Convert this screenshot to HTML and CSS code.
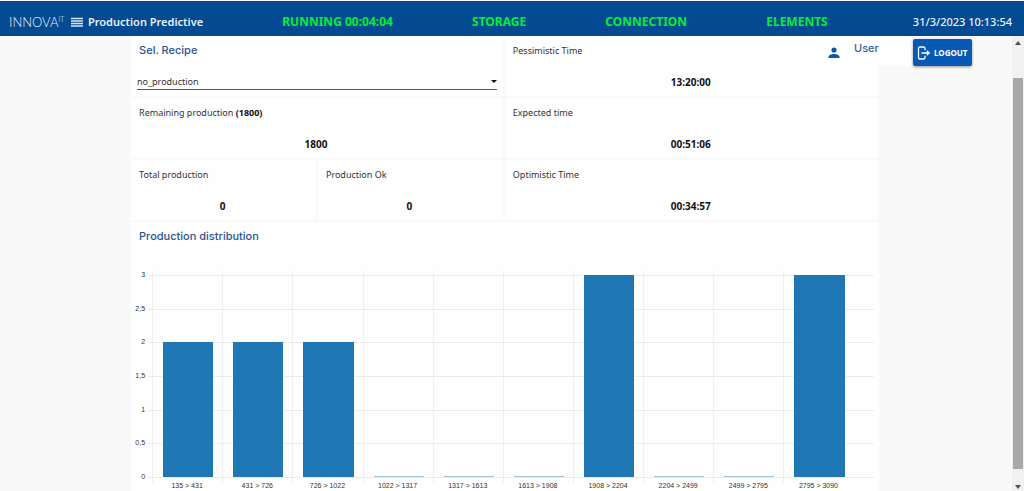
FILE: index.html
```html
<!DOCTYPE html>
<html lang="en">
<head>
<meta charset="utf-8">
<meta name="viewport" content="width=device-width, initial-scale=1">
<title>Production Predictive</title>
<link rel="stylesheet" href="styles.css">
</head>
<body>
<header class="topbar">
  <div class="brand">
    <span class="logo">INNOVA<sup class="logo-sup">IT</sup></span>
    <button class="menu-button" type="button" aria-label="Menu">
      <svg width="12" height="10" viewBox="0 0 12 10" aria-hidden="true"><path d="M0 1.500h12M0 4h12M0 6.500h12M0 9h12" stroke="#d5e4f5" stroke-width="1.400"/></svg>
    </button>
    <h1 class="page-title">Production Predictive</h1>
  </div>
  <span class="status">RUNNING 00:04:04</span>
  <span class="status">STORAGE</span>
  <span class="status">CONNECTION</span>
  <span class="status">ELEMENTS</span>
  <time class="clock">31/3/2023 10:13:54</time>
</header>

<div class="workspace">
  <main class="panel">
    <section class="cells">
      <div class="cell span-two">
        <label class="heading" for="recipe">Sel. Recipe</label>
        <div class="select-wrap">
          <select class="recipe" id="recipe"><option>no_production</option></select>
        </div>
      </div>
      <div class="cell">
        <span class="label">Pessimistic Time</span>
        <strong class="value">13:20:00</strong>
      </div>
      <div class="cell span-two">
        <span class="label">Remaining production <b>(1800)</b></span>
        <strong class="value">1800</strong>
      </div>
      <div class="cell">
        <span class="label">Expected time</span>
        <strong class="value">00:51:06</strong>
      </div>
      <div class="cell">
        <span class="label">Total production</span>
        <strong class="value">0</strong>
      </div>
      <div class="cell">
        <span class="label">Production Ok</span>
        <strong class="value">0</strong>
      </div>
      <div class="cell">
        <span class="label">Optimistic Time</span>
        <strong class="value">00:34:57</strong>
      </div>
    </section>

    <section class="distribution">
      <h2 class="heading">Production distribution</h2>
      <div class="chart">
        <div class="y-axis">
          <span>3</span><span>2,5</span><span>2</span><span>1,5</span><span>1</span><span>0,5</span><span>0</span>
        </div>
        <div class="lines"><i></i><i></i><i></i><i></i><i></i><i></i><i></i></div>
        <div class="columns">
          <div class="column"><div class="bar" style="height:66.67%"></div></div>
          <div class="column"><div class="bar" style="height:66.67%"></div></div>
          <div class="column"><div class="bar" style="height:66.67%"></div></div>
          <div class="column"><div class="bar empty"></div></div>
          <div class="column"><div class="bar empty"></div></div>
          <div class="column"><div class="bar empty"></div></div>
          <div class="column"><div class="bar" style="height:100%"></div></div>
          <div class="column"><div class="bar empty"></div></div>
          <div class="column"><div class="bar empty"></div></div>
          <div class="column"><div class="bar" style="height:100%"></div></div>
        </div>
        <div class="x-axis">
          <span>135 &gt; 431</span><span>431 &gt; 726</span><span>726 &gt; 1022</span><span>1022 &gt; 1317</span><span>1317 &gt; 1613</span><span>1613 &gt; 1908</span><span>1908 &gt; 2204</span><span>2204 &gt; 2499</span><span>2499 &gt; 2795</span><span>2795 &gt; 3090</span>
        </div>
      </div>
    </section>
  </main>

  <div class="account">
    <svg class="avatar" width="12" height="12" viewBox="0 0 12 12" aria-hidden="true"><circle cx="6" cy="3" r="2.600" fill="#0d57a8"/><path d="M0.500 11V10C0.500 8 3.500 7 6 7s5.500 1 5.500 3v1z" fill="#0d57a8"/></svg>
    <span class="user">User</span>
    <button class="logout" type="button">
      <svg width="14" height="14" viewBox="0 0 14 14" fill="none" stroke="#fff" stroke-width="1.300" aria-hidden="true"><path d="M8 4.200V2.600Q8 1 6.500 1H3Q1.500 1 1.500 2.600v8.800Q1.500 13 3 13h3.500q1.500 0 1.500-1.600V9.800M4.500 7h7.500"/><path d="M10 4.500L13 7l-3 2.500z" fill="#fff" stroke-width=".5"/></svg>
      LOGOUT
    </button>
  </div>

  <div class="scrollbar" aria-hidden="true">
    <svg width="6" height="4" viewBox="0 0 6 4"><path d="M0 4L3 0l3 4z" fill="#505050"/></svg>
    <div class="track"><div class="thumb"></div></div>
    <svg width="6" height="4" viewBox="0 0 6 4"><path d="M0 0l3 4 3-4z" fill="#505050"/></svg>
  </div>
</div>
</body>
</html>
```

FILE: styles.css
```css
* { box-sizing: border-box; }

body {
  margin: 0;
  height: 100vh;
  display: flex;
  flex-direction: column;
  overflow: hidden;
  background: #f9f9f9;
  color: #333;
  font-family: "Noto Sans", "Open Sans", sans-serif;
  font-size: 9px;
  line-height: 14px;
}

/* Top bar */
.topbar {
  display: flex;
  align-items: center;
  justify-content: space-between;
  flex: none;
  height: 36px;
  padding: 6px 12px 0 9px;
  border-top: 1px solid #fff;
  background: #044a92;
  color: #e9f1fa;
  font-size: 11px;
  white-space: nowrap;
}
.brand { display: flex; align-items: center; }
.logo {
  width: 62px;
  font-family: Lato, sans-serif;
  font-weight: 300;
  font-size: 13px;
}
.logo-sup { font-size: 7px; line-height: 7px; vertical-align: 5px; }
.menu-button {
  display: flex;
  width: 12px;
  margin-right: 5px;
  padding: 0;
  border: 0;
  background: none;
}
.page-title { margin: 0; font-size: 11px; font-weight: 600; }
.status { color: #00f032; font-size: 12px; font-weight: 700; }
.clock { padding-left: 6px; font-weight: 500; }

/* Page body */
.workspace {
  position: relative;
  display: flex;
  flex: 1;
  min-height: 0;
}
.panel {
  width: 73%;
  margin: 0 auto 0 13%;
  margin-left: 12.8%;
  background: #fefefe;
}
.cells {
  display: grid;
  grid-template-columns: 1fr 1fr 2fr;
}
.cell {
  display: flex;
  flex-direction: column;
  height: 62px;
  padding: 8px 0 0 8px;
  border-bottom: 2px solid #f9f9f9;
  border-right: 2px solid #f9f9f9;
}
.cell:nth-child(2), .cell:nth-child(4), .cell:nth-child(7) { border-right: 0; }
.span-two { grid-column: span 2; }
.label b { color: #111; }
.value {
  margin: 17px 10px 0 0;
  color: #111;
  font-size: 10px;
  text-align: center;
}
.heading {
  margin: 0;
  color: #2b5597;
  font-family: Inter, sans-serif;
  font-size: 11px;
  font-weight: 500;
}
.cell .heading { line-height: 12px; }

/* Recipe picker */
.select-wrap {
  position: relative;
  margin: 16px 6px 0 -2px;
}
.select-wrap::after {
  content: "";
  position: absolute;
  top: 8px;
  right: 0;
  border: 3px solid transparent;
  border-top-color: #111;
  pointer-events: none;
}
.recipe {
  display: block;
  width: 100%;
  height: 18px;
  padding: 2px 0 0;
  border: 0;
  border-bottom: 1px solid #555;
  border-radius: 0;
  appearance: none;
  background: none;
  color: #333;
  font: inherit;
}

/* Chart */
.distribution .heading { padding: 7px 8px 0; }
.chart {
  display: grid;
  grid-template-columns: 21px 1fr;
  grid-template-rows: 202px auto;
  padding: 32px 5px 0 0;
  color: #333;
  font-family: "Liberation Sans", sans-serif;
  font-size: 7px;
  line-height: 8px;
}
.y-axis {
  display: flex;
  flex-direction: column;
  justify-content: space-between;
  margin: -4px 7px -4px 0;
  text-align: right;
}
.lines, .columns { grid-area: 1 / 2; }
.lines {
  display: flex;
  flex-direction: column;
  justify-content: space-between;
  margin: 0 0 -1px -4px;
}
.lines i { height: 1px; background: #ececec; }
.columns, .x-axis {
  display: grid;
  grid-template-columns: repeat(10, 7fr) 2fr;
}
.columns { z-index: 1; }
.column {
  display: flex;
  align-items: flex-end;
  margin: -4px 0 -6px;
  padding: 4px 9px 6px 10px;
  border-left: 1px solid #f0f0f0;
}
.bar { width: 100%; background: #1f77b4; }
.bar.empty { height: 1px; background: #9dc1da; }
.x-axis {
  grid-column: 2;
  padding-top: 5px;
  text-align: center;
  white-space: nowrap;
}

/* Account strip */
.account {
  position: absolute;
  top: 0;
  right: 52px;
  z-index: 2;
  display: flex;
  align-items: flex-start;
}
.avatar { margin: 11px 14px 0 0; }
.user {
  width: 59px;
  height: 30px;
  padding-top: 5px;
  background: #fefefe;
  color: #3c5f96;
  font-family: Inter, sans-serif;
  font-size: 11px;
  font-weight: 500;
}
.logout {
  display: flex;
  align-items: center;
  gap: 3px;
  width: 59px;
  height: 27px;
  margin-top: 3px;
  padding: 0 4px;
  border: 0;
  border-radius: 2px;
  background: #0759b5;
  box-shadow: 0 1px 3px rgba(0, 0, 0, .4);
  color: #fff;
  font-family: "Noto Sans", sans-serif;
  font-size: 8px;
  font-weight: 700;
}

/* Scrollbar */
.scrollbar {
  display: flex;
  flex-direction: column;
  align-items: center;
  width: 12px;
  padding: 5px 0 2px;
  background: #f1f1f1;
}
.track { flex: 1; width: 10px; padding: 33px 0 16px; }
.thumb { height: 100%; background: #a8a8a8; }
```
